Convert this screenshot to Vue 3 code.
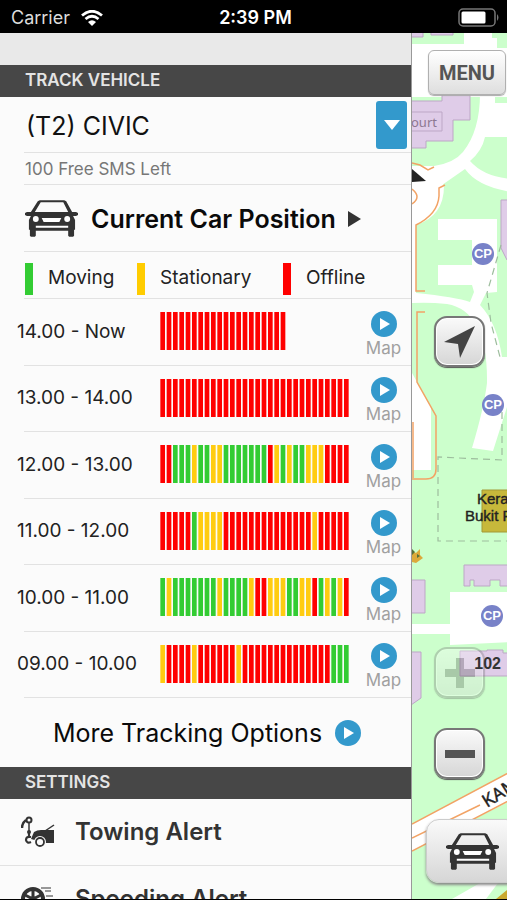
<script setup>
import { ref } from 'vue'

const vehicle = ref('(T2) CIVIC')

const legend = [
  { label: 'Moving', cls: 'g' },
  { label: 'Stationary', cls: 'y' },
  { label: 'Offline', cls: 'r' },
]

const hours = [
  { time: '14.00 - Now', log: 'rrrrrrrrrrrrrrrrrrrr' },
  { time: '13.00 - 14.00', log: 'rrrrrrrrrrrrrrrrrrrrrrrrrrrrrr' },
  { time: '12.00 - 13.00', log: 'rrgggyggyygggggggrygyggyyyrrrr' },
  { time: '11.00 - 12.00', log: 'rrrrrgyyyyrrrrrrrrrrrrrryrrrrr' },
  { time: '10.00 - 11.00', log: 'gygggggggyggggyrryyyggyyrgygyr' },
  { time: '09.00 - 10.00', log: 'yrrrryrrrrrryrrrrrrrrrrrrrrggg' },
]
</script>

<template>
  <div class="screen">
    <svg class="defs" aria-hidden="true">
      <symbol id="car" viewBox="0 0 54 39">
        <path d="M15 1h25l2 1 6 11h4l2 1v2l-2 1h-3l2 4v10h-1v6l-1 1h-4l-1-1v-5H11v5l-1 1H6l-1-1v-6H4V21l2-4H2l-2-1v-2l2-1h4L13 2zM16 3L10 13h34L39 3z" fill="#333" fill-rule="evenodd" />
        <circle cx="11" cy="20" r="3" fill="#fff" />
        <circle cx="43" cy="20" r="3" fill="#fff" />
        <path d="M17 19h20l-2 4H19zM11 27h33v2H11z" fill="#fff" />
      </symbol>
      <symbol id="play" viewBox="0 0 26 26">
        <circle cx="13" cy="13" r="13" fill="#3399cc" />
        <path d="M9 7l10 6-10 6z" fill="#fff" />
      </symbol>
    </svg>

    <header class="status">
      <div class="carrier">
        <span>Carrier</span>
        <svg class="wifi" viewBox="0 0 22 16">
          <path d="M1 5.500Q11-3 21 5.500M4.500 9Q11 3.500 17.500 9" fill="none" stroke="#fff" stroke-width="2.800" />
          <path d="M7 12Q11 8.500 15 12L11 16z" fill="#fff" />
        </svg>
      </div>
      <time class="clock">2:39 PM</time>
      <svg class="battery" viewBox="0 0 42 20">
        <rect x="1" y="1" width="36" height="17" rx="4" fill="none" stroke="#777" stroke-width="1.500" />
        <rect x="3.500" y="3.500" width="24" height="12" rx="1.500" fill="#fff" />
        <path d="M39 6q3 3.500 0 7z" fill="#777" />
      </svg>
    </header>

    <main class="body">
      <nav class="panel">
        <div class="spacer"></div>
        <h2 class="section">TRACK VEHICLE</h2>

        <div class="vehicle">
          <select v-model="vehicle" aria-label="Vehicle">
            <option>(T2) CIVIC</option>
          </select>
          <span class="drop">
            <svg viewBox="0 0 16 10"><path d="M0 0h16L8 10z" fill="#fff" /></svg>
          </span>
        </div>
        <p class="sms">100 Free SMS Left</p>

        <a class="current" href="#position">
          <svg class="car"><use href="#car" /></svg>
          <span>Current Car Position</span>
          <svg class="tri" viewBox="0 0 13 16"><path d="M0 0l13 8-13 8z" fill="#333" /></svg>
        </a>

        <ul class="legend">
          <li v-for="l in legend" :key="l.label">
            <i :class="l.cls"></i><span>{{ l.label }}</span>
          </li>
        </ul>

        <ul class="hours">
          <li v-for="h in hours" :key="h.time">
            <span class="time">{{ h.time }}</span>
            <svg class="bars" viewBox="0 0 570 39" preserveAspectRatio="none">
              <rect v-for="(c, i) in h.log" :key="i" :class="c" :x="i * 19 + 1" y="0" width="14" height="39" />
            </svg>
            <a class="map-link" href="#map">
              <svg class="play"><use href="#play" /></svg>
              <span>Map</span>
            </a>
          </li>
        </ul>

        <a class="more" href="#more">
          <span>More Tracking Options</span>
          <svg class="play"><use href="#play" /></svg>
        </a>

        <h2 class="section">SETTINGS</h2>
        <a class="setting" href="#towing">
          <svg class="glyph" viewBox="0 0 34 34">
            <g fill="none" stroke="#333">
              <circle cx="8" cy="5" r="2.500" stroke-width="2" />
              <path d="M8 7v11" stroke-width="1.500" />
              <path d="M8 18v4M10 22q-5-1-5 3 1 4 5 2" stroke-width="2.200" />
              <path d="M5 5Q1 8 1 13" stroke-width="2.500" />
              <path d="M24 16l9-6" stroke-width="1.500" />
            </g>
            <path d="M10 24l3-7q3-2 7-2h13v13h-9z" fill="#333" />
            <circle cx="8" cy="17" r="2" fill="#333" />
            <circle cx="19" cy="27" r="6" fill="#fbfbfb" />
            <circle cx="19" cy="27" r="4" fill="none" stroke="#333" stroke-width="1.800" />
          </svg>
          <span>Towing Alert</span>
        </a>
        <a class="setting" href="#speeding">
          <svg class="glyph" viewBox="0 0 34 34">
            <circle cx="12" cy="17" r="10" fill="#fbfbfb" stroke="#333" stroke-width="4" />
            <path d="M12 8v9l8-4M12 17l-8-4M12 17l5 7M12 17l-5 7" stroke="#333" stroke-width="3" fill="none" />
            <path d="M20 6h10M24 9h6M25 14h7M25 19h6" stroke="#777" stroke-width="1.500" />
          </svg>
          <span>Speeding Alert</span>
        </a>
      </nav>

      <section class="map" aria-label="Map">
        <svg class="tiles" viewBox="412 33 95 866" preserveAspectRatio="xMinYMin slice">
          <rect x="412" y="33" width="400" height="866" fill="#ccffcc" />
          <g fill="#fff">
            <path d="M412 44h52V33h28v5h5v10h15v49h-70H412z" />
            <path d="M482 88h13v15h17v34h-27q-3 14-15 24 14 16 42 18v13q-34-5-47-23-10 7-23 16l-32 8v-26l24-1q20-3 29-14 18-22 17-64z" />
            <path d="M412 166h20l12 20q0 30-28 39v68q40 4 54 9l4-10-2-7h-34v-20h34v-25h-34v-21h59v73l-11 1-6 12q17 18 22 52h5v50l-14 44-21-3q12-40 15-65 1-72-40-79-18-2-35-1v70l19 34v63h-24z" />
            <path d="M412 624h38v-32h62v50l-62 3v-11h-38z" />
            <path d="M412 824l100-53v29L412 851zM452 899l28-16h18l-12 16z" />
          </g>
          <g fill="#dfcce8" stroke="#bda7c6">
            <path d="M411 32h12v5h-12zM431 32h22v3h-22z" />
            <path d="M411 101h31V90h28v30h-17v21h-27v7h-15z" />
            <path d="M411 112h31v19h-31z" />
            <path d="M512 200h-11v48l6 12h5z" />
            <path d="M464 565h50v21h-14v-6h-10v6h-16v-6h-4v6h-6z" />
            <path d="M411 580h14v33h-14zM411 652h10v46l-10 7z" />
            <path d="M460 651h27v-1h16v3h9v23h-52z" />
          </g>
          <g fill="none" stroke="#f2a365" stroke-width="1.500">
            <path d="M412 163l8 2 8 5 6-3M445 185l-6 3v8q-1 18-23 29v66h9M425 312h-8v70l19 34v53q0 10-10 10h-14M413 422v56M412 189q10 8 0 15" />
            <path d="M412 824l100-53M412 851l100-52M412 838l68-33" />
          </g>
          <path d="M412 169l14 12-14 1z" fill="#222" />
          <path d="M501 245l-14 48 4 30 9 34M502 400v60l-64-3v84h74" fill="none" stroke="#9dbd9d" stroke-dasharray="7 5" stroke-width="1.200" />
          <path d="M482 490h30v42h-30z" fill="#c7b83b" stroke="#a39836" />
          <path d="M412 551l4 2 4-4v6l3 3-7 5-4-1z" fill="#dca93b" />
          <path d="M412 549l3 3-3 3zM417 554l3 2-3 2z" fill="#54703c" />
          <path d="M496 899l16-13v13z" fill="#c9a92f" />
          <g class="parking">
            <g v-for="p in [[483, 254], [493, 405], [492, 616]]" :key="p[1]">
              <circle :cx="p[0]" :cy="p[1]" r="11" fill="#7882c8" />
              <text :x="p[0]" :y="p[1] + 4">CP</text>
            </g>
          </g>
          <text class="court" x="411" y="127">ourt</text>
          <text class="place" x="477" y="504">Kera</text>
          <text class="place" x="465" y="521">Bukit P</text>
          <text class="road" transform="translate(487 808) rotate(-32)">KAM</text>
        </svg>

        <button class="ctl menu">MENU</button>
        <button class="ctl sq locate" aria-label="Locate">
          <svg viewBox="0 0 32 32"><path d="M31 0L16 32l-2-14-14-2z" fill="#444" /></svg>
        </button>
        <button class="ctl sq plus" aria-label="Zoom in">
          <svg viewBox="0 0 32 32"><path d="M12 1h8v11h11v8H20v11h-8V20H1v-8h11z" fill="#666" /></svg>
        </button>
        <span class="block">102</span>
        <button class="ctl sq minus" aria-label="Zoom out">
          <svg viewBox="0 0 32 32"><path d="M1 12h30v8H1z" fill="#555" /></svg>
        </button>
        <button class="ctl find" aria-label="Car position">
          <svg class="car"><use href="#car" /></svg>
        </button>
      </section>
    </main>
  </div>
</template>

<style>
body {
  margin: 0;
  background: #000;
}
</style>

<style scoped>
* {
  box-sizing: border-box;
}
.screen {
  display: flex;
  flex-direction: column;
  height: 100vh;
  overflow: hidden;
  background: #000;
  color: #222;
  font-family: Inter, "Liberation Sans", sans-serif;
}
.defs {
  position: absolute;
  width: 0;
  height: 0;
}
svg {
  display: block;
  flex: none;
}
h2, p, ul {
  margin: 0;
  padding: 0;
  list-style: none;
}
a {
  color: inherit;
  text-decoration: none;
}
.status {
  flex: none;
  display: grid;
  grid-template-columns: 1fr auto 1fr;
  align-items: center;
  height: 33px;
  padding: 2px 7px 0 11px;
  color: #fff;
  font-size: 18px;
}
.carrier {
  display: flex;
  align-items: center;
  gap: 11px;
  color: #ddd;
}
.wifi {
  width: 22px;
  height: 16px;
}
.clock {
  font-weight: 600;
}
.battery {
  width: 42px;
  height: 20px;
  justify-self: end;
}
.body {
  flex: 1;
  min-height: 0;
  display: grid;
  grid-template-columns: minmax(0, 1fr) 96px;
  margin-bottom: 1px;
}
.panel {
  min-height: 0;
  overflow: hidden;
  background: #fbfbfb;
}
.spacer {
  height: 32px;
  background: #e9e9e9;
}
.section {
  height: 32px;
  padding-left: 25px;
  background: #474747;
  color: #e4e4e4;
  font-size: 17px;
  font-weight: 600;
  line-height: 31px;
}
.vehicle,
.sms,
.current,
.legend,
.hours li {
  position: relative;
}
.vehicle::after,
.sms::after,
.current::after,
.legend::after,
.hours li::after {
  content: "";
  position: absolute;
  left: 24px;
  right: 0;
  bottom: 0;
  border-bottom: 1px solid #e2e2e2;
}
.vehicle {
  height: 56px;
}
.vehicle select {
  width: 100%;
  height: 56px;
  padding: 2px 40px 0 26px;
  border: 0;
  background: none;
  appearance: none;
  color: #111;
  font-family: inherit;
  font-size: 25px;
}
.drop {
  position: absolute;
  top: 4px;
  right: 4px;
  display: grid;
  place-items: center;
  width: 31px;
  height: 48px;
  border-radius: 3px;
  background: #3399cc;
  pointer-events: none;
}
.drop svg {
  width: 16px;
  height: 10px;
}
.sms {
  height: 32px;
  padding-left: 25px;
  color: #777;
  font-size: 17px;
  line-height: 32px;
}
.current {
  display: flex;
  align-items: center;
  height: 67px;
  padding-left: 25px;
  color: #0a0a0a;
  font-size: 25px;
  font-weight: 600;
}
.car {
  width: 53px;
  height: 39px;
}
.current span {
  margin: 0 12px 0 13px;
}
.tri {
  width: 13px;
  height: 16px;
}
.legend {
  display: grid;
  grid-template-columns: 112px 146px 1fr;
  height: 47px;
  padding: 8px 0 0 25px;
  font-size: 19px;
}
.legend li {
  display: flex;
  align-items: center;
  gap: 15px;
  height: 38px;
}
.legend i {
  width: 8px;
  height: 32px;
}
.legend span {
  padding-bottom: 4px;
}
i.g { background: #33cc33; }
i.y { background: #ffcc00; }
i.r { background: #ff0000; }
rect.g { fill: #33cc33; }
rect.y { fill: #ffcc11; }
rect.r { fill: #ff0000; }
.hours {
  display: grid;
  grid-auto-rows: 1fr;
  min-height: 399px;
}
.hours li {
  display: grid;
  grid-template-columns: 143px 190px 1fr;
  align-items: center;
  padding: 0 0 2px 17px;
}
.time {
  font-size: 19px;
}
.bars {
  width: 190px;
  height: 38px;
}
.map-link {
  display: flex;
  flex-direction: column;
  align-items: center;
  padding: 7px 0 0 6px;
  color: #a0a0a0;
  font-size: 17px;
  line-height: 22px;
}
.play {
  width: 26px;
  height: 26px;
}
.more {
  display: flex;
  align-items: center;
  justify-content: center;
  gap: 13px;
  height: 69px;
  padding-left: 3px;
  color: #0a0a0a;
  font-size: 25px;
}
.setting {
  display: flex;
  align-items: center;
  gap: 20px;
  height: 67px;
  padding: 0 0 1px 21px;
  border-bottom: 1px solid #e2e2e2;
  color: #333;
  font-size: 24px;
  font-weight: 600;
}
.glyph {
  width: 34px;
  height: 34px;
}
.map {
  position: relative;
  min-height: 0;
  overflow: hidden;
  border-left: 1px solid #999;
  background: #ccffcc;
}
.tiles {
  width: 100%;
  height: 100%;
}
.parking text {
  fill: #fff;
  font: bold 13px "Liberation Sans", sans-serif;
  text-anchor: middle;
}
.court {
  fill: #8d7891;
  font: 13px "Noto Sans", sans-serif;
}
.place {
  fill: #222;
  stroke: #222;
  stroke-width: 0.4px;
  font: 15px "Liberation Sans", sans-serif;
}
.road {
  fill: #222;
  stroke: #222;
  stroke-width: 0.4px;
  font: 18px "Noto Sans", sans-serif;
}
.ctl {
  position: absolute;
  display: grid;
  place-items: center;
  padding: 0;
  border: 1px solid #999;
  background: linear-gradient(#fafafa, #d6d6d6);
}
.menu {
  top: 17px;
  right: 1px;
  width: 78px;
  height: 45px;
  border-color: #b0b0b0;
  border-radius: 6px;
  box-shadow: 0 1px 1px #aaa;
  background: linear-gradient(#fff, #dedede);
  color: #555;
  font: bold 20px Roboto, sans-serif;
}
.sq {
  right: 22px;
  width: 51px;
  height: 51px;
  border: 2px solid #777;
  border-radius: 13px;
  box-shadow: inset 0 0 0 1px #fff, 0 1px 1px #555;
}
.sq svg {
  width: 32px;
  height: 32px;
}
.locate {
  top: 283px;
}
.plus {
  top: 614px;
  opacity: 0.35;
}
.minus {
  top: 695px;
}
.block {
  position: absolute;
  top: 622px;
  right: 6px;
  color: #333;
  font: bold 16px/18px "Liberation Sans", sans-serif;
}
.find {
  top: 786px;
  right: -12px;
  width: 93px;
  height: 64px;
  border-color: #ccc;
  border-radius: 13px;
  box-shadow: 0 2px 3px #888;
}
</style>
